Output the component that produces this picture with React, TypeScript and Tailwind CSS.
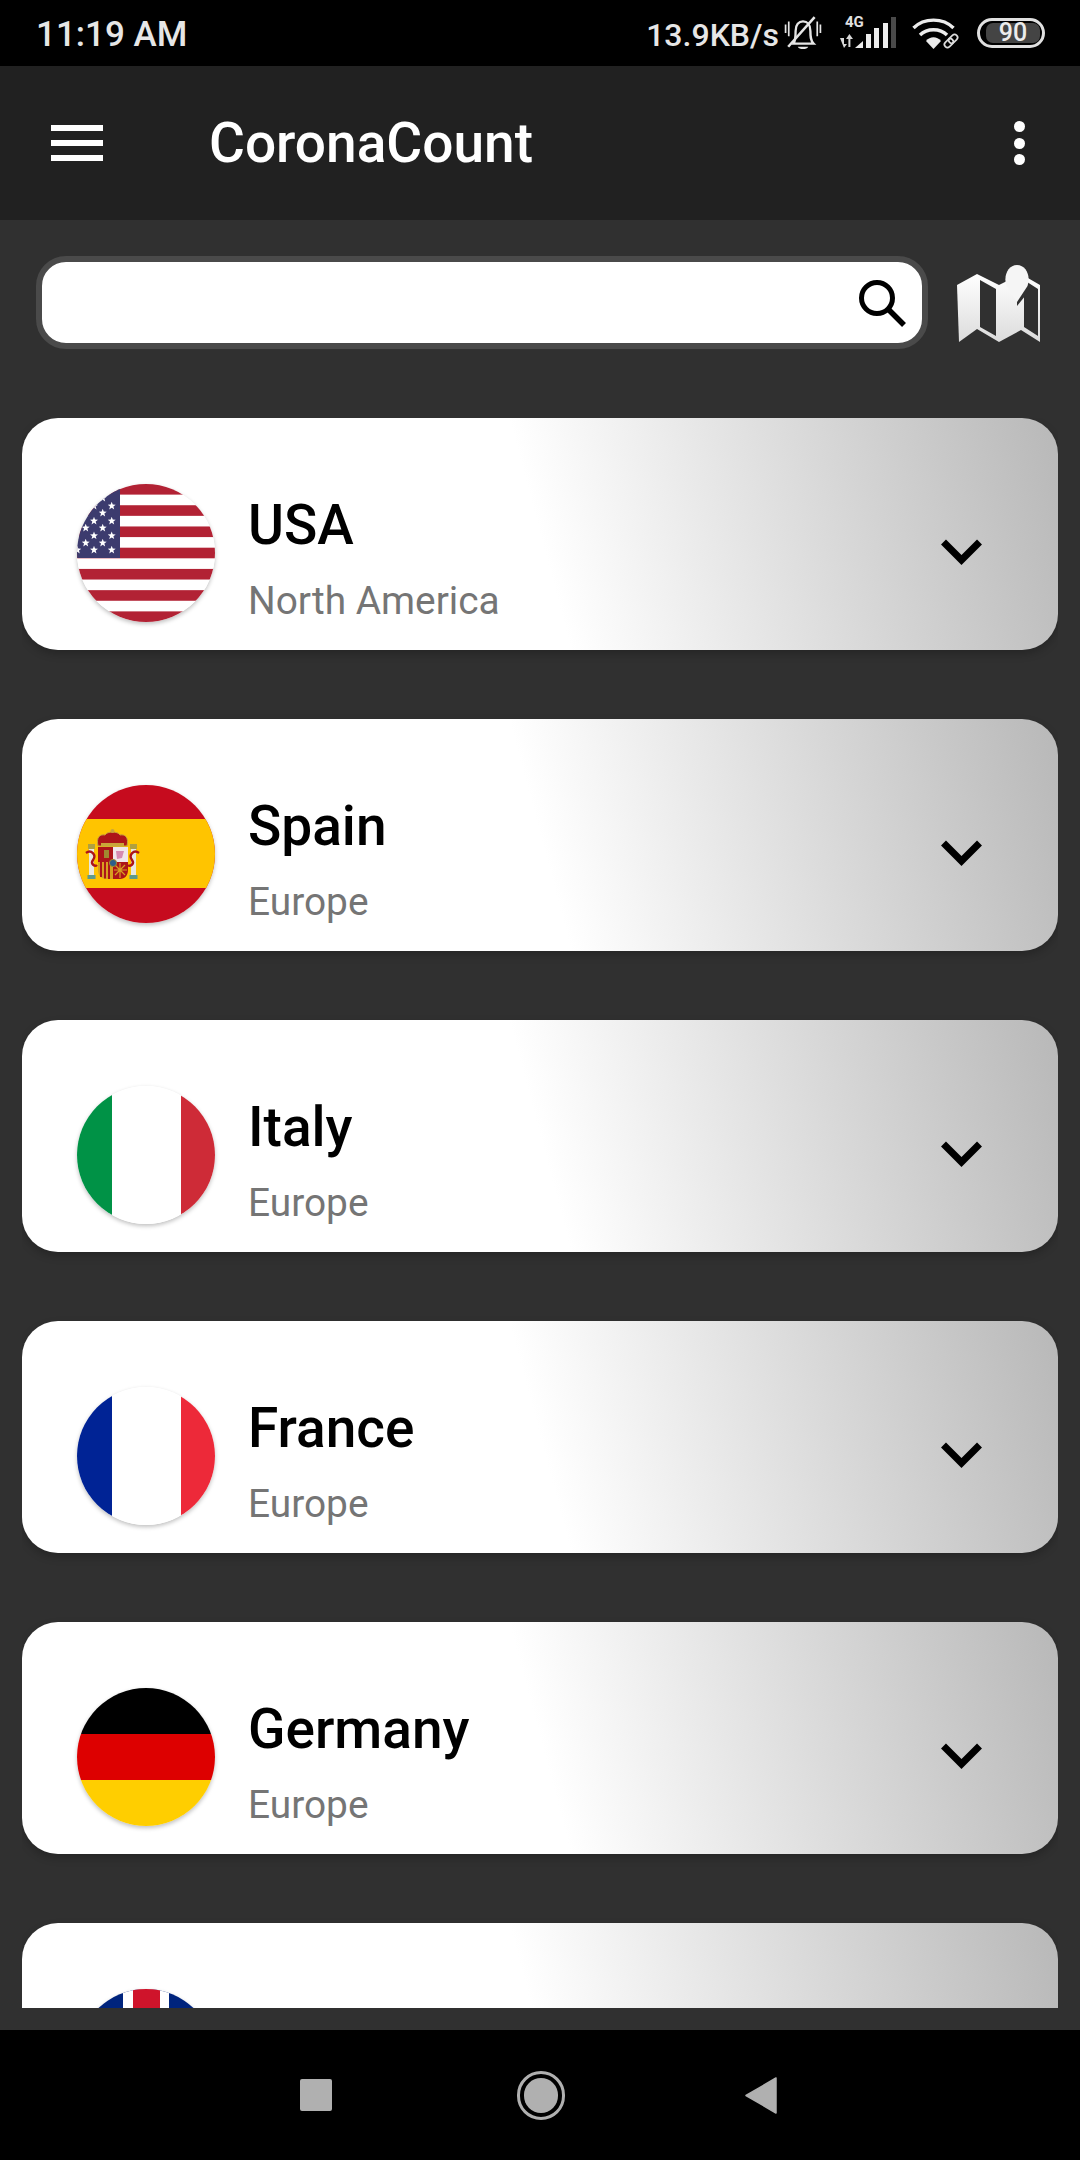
import React from "react";

const starPath = (cx: number, cy: number, r: number) => {
  let d = "";
  for (let i = 0; i < 10; i++) {
    const rad = i % 2 === 0 ? r : r * 0.42;
    const a = (Math.PI / 5) * i - Math.PI / 2;
    d += `${i === 0 ? "M" : "L"}${(cx + rad * Math.cos(a)).toFixed(2)} ${(cy + rad * Math.sin(a)).toFixed(2)}`;
  }
  return d + "Z";
};

const usaStars: [number, number][] = [
  [25.7, 14], [17, 22], [34.7, 22], [8.7, 29], [25.7, 29], [17, 37], [34.7, 37], [8.7, 44],
  [25.7, 44], [17, 51.7], [34.7, 51.7], [8.7, 59], [25.7, 59], [0.3, 66], [17, 66], [34.7, 66],
];

function UsaFlag() {
  const s = 138 / 13;
  return (
    <svg viewBox="0 0 138 138" className="w-full h-full block">
      <rect width="138" height="138" fill="#ffffff" />
      {[0, 2, 4, 6, 8, 10, 12].map((i) => (
        <rect key={i} y={i * s} width="138" height={s} fill="#b22234" />
      ))}
      <rect width="43" height="74" fill="#3c3b6e" />
      {usaStars.map(([x, y], i) => (
        <path key={i} d={starPath(x, y, 4.2)} fill="#ffffff" />
      ))}
    </svg>
  );
}

function SpainFlag() {
  return (
    <svg viewBox="0 0 138 138" className="w-full h-full block">
      <rect width="138" height="138" fill="#c60b1e" />
      <rect y="34" width="138" height="69" fill="#ffc400" />
      {/* crown */}
      <path d="M21 61 C19 52 23 49 28 50 C30 46 41 46 43 50 C48 49 52 52 50 61 Z" fill="#ad1519" stroke="#c8a53a" strokeWidth="1" />
      <circle cx="35.5" cy="46" r="2" fill="#c8a53a" />
      <rect x="24" y="58" width="23" height="3.5" fill="#c8a53a" />
      {/* pillars */}
      <rect x="12" y="64" width="5" height="26" fill="#e8e8e0" />
      <rect x="54" y="64" width="5" height="26" fill="#e8e8e0" />
      <rect x="11" y="59" width="7" height="5" fill="#b0a040" />
      <rect x="53" y="59" width="7" height="5" fill="#b0a040" />
      <rect x="10.5" y="90" width="8" height="4" fill="#5f9a8a" />
      <rect x="52.5" y="90" width="8" height="4" fill="#5f9a8a" />
      {/* ribbons */}
      <path d="M9 68 C14 64 20 70 16 75 C13 79 18 82 20 80" fill="none" stroke="#ad1519" strokeWidth="2.4" />
      <path d="M62 68 C57 64 51 70 55 75 C58 79 53 82 51 80" fill="none" stroke="#ad1519" strokeWidth="2.4" />
      {/* shield */}
      <rect x="21" y="62" width="15" height="15" fill="#ad1519" />
      <rect x="27" y="65" width="5" height="8" fill="#a08a30" />
      <rect x="36" y="62" width="15" height="15" fill="#f0e6ea" />
      <path d="M39 66 L47 66 L45 73 L40 74 Z" fill="#d68bb0" />
      <path d="M21 77 H36 V94 H29 C24 94 21 90 21 85 Z" fill="#d8a020" />
      <path d="M24 77 V92 M28 77 V93.5 M32 77 V94" stroke="#ad1519" strokeWidth="2" fill="none" />
      <path d="M36 77 H51 V85 C51 90 48 94 43 94 H36 Z" fill="#ad1519" />
      <path d="M38 80 L48 90 M48 80 L38 90 M43 78 V93 M37 85 H50" stroke="#d8a020" strokeWidth="1.2" fill="none" />
      <circle cx="36" cy="78" r="3.6" fill="#2d5f8a" stroke="#a08a30" strokeWidth="1" />
    </svg>
  );
}

function TriVertical({ a, b }: { a: string; b: string }) {
  return (
    <svg viewBox="0 0 138 138" className="w-full h-full block">
      <rect width="138" height="138" fill="#ffffff" />
      <rect width="35" height="138" fill={a} />
      <rect x="104" width="34" height="138" fill={b} />
    </svg>
  );
}

function GermanyFlag() {
  return (
    <svg viewBox="0 0 138 138" className="w-full h-full block">
      <rect width="138" height="46" fill="#000000" />
      <rect y="46" width="138" height="46" fill="#dd0000" />
      <rect y="92" width="138" height="46" fill="#ffce00" />
    </svg>
  );
}

function UkFlag() {
  return (
    <svg viewBox="0 0 138 138" className="w-full h-full block">
      <rect width="138" height="138" fill="#00247d" />
      <rect x="46" width="46" height="138" fill="#ffffff" />
      <rect y="46" width="138" height="46" fill="#ffffff" />
      <rect x="56" width="27" height="138" fill="#cf142b" />
      <rect y="56" width="138" height="27" fill="#cf142b" />
    </svg>
  );
}

const countries: { id: string; name: string; region: string; flag: React.ReactNode }[] = [
  { id: "us", name: "USA", region: "North America", flag: <UsaFlag /> },
  { id: "es", name: "Spain", region: "Europe", flag: <SpainFlag /> },
  { id: "it", name: "Italy", region: "Europe", flag: <TriVertical a="#009246" b="#ce2b37" /> },
  { id: "fr", name: "France", region: "Europe", flag: <TriVertical a="#002395" b="#ed2939" /> },
  { id: "de", name: "Germany", region: "Europe", flag: <GermanyFlag /> },
  { id: "uk", name: "", region: "", flag: <UkFlag /> },
];

function Card({ name, region, flag }: { name: string; region: string; flag: React.ReactNode }) {
  return (
    <div className="shrink-0 h-[232px] rounded-[36px] flex items-start pt-[66px] pl-[55px] pr-[76px] shadow-[0_4px_8px_rgba(0,0,0,0.22)] bg-[linear-gradient(75deg,#ffffff_50%,#b8b8b8_100%)]">
      <div className="w-[138px] h-[138px] shrink-0 rounded-full overflow-hidden shadow-[0_2px_4px_rgba(0,0,0,0.25)]">{flag}</div>
      <div className="ml-[33px] mt-[10px] flex-1 flex flex-col">
        <div className="text-[55px] leading-[62px] font-medium text-black">{name}</div>
        <div className="mt-[22px] text-[38.85px] leading-[46px] text-[#757575]">{region}</div>
      </div>
      <svg viewBox="0 0 41 26" className="w-[41px] h-[26px] mt-[55px] shrink-0">
        <path d="M2.5 3 L20.5 21 L38.5 3" fill="none" stroke="#000000" strokeWidth="7" />
      </svg>
    </div>
  );
}

function StatusIcons() {
  return (
    <div className="flex items-center ml-[5px]">
      {/* muted bell */}
      <svg viewBox="0 0 36 34" className="w-[38px] h-[36px] text-[#e6e6e6]">
        <g fill="none" stroke="currentColor">
          <path d="M1.5 9 V17 M4.5 6 V20 M31.5 6 V20 M34.5 9 V17" strokeWidth="1.6" />
          <path d="M9 27 C11 24 11 20 11 15 C11 9 14 6 18 6 C22 6 25 9 25 15 C25 20 25 24 28 27 Z" strokeWidth="2.2" />
          <path d="M4 30 L29 2" strokeWidth="2.4" />
        </g>
        <path d="M13 30 H23 C22 33 14 33 13 30 Z" fill="currentColor" />
      </svg>
      {/* signal */}
      <div className="relative w-[58px] h-[34px] ml-[18px]">
        <span className="absolute left-[5px] top-[-3px] text-[15px] leading-[18px] font-bold text-[#e0e0e0]">4G</span>
        <svg viewBox="0 0 58 34" className="w-[58px] h-[34px]">
          <path d="M0 24 L4 24 L4 30 L7 30 L4 34 Z" fill="#d8d8d8" transform="translate(0 -2)" />
          <rect x="8.4" y="20" width="2" height="11" fill="#d8d8d8" />
          <path d="M9.4 18 L13 23 H6 Z" fill="#d8d8d8" />
          <path d="M15 32 L23 25 V32 Z" fill="#ececec" />
          <rect x="26" y="18" width="5" height="14" fill="#ececec" />
          <rect x="34" y="12" width="5" height="20" fill="#ececec" />
          <rect x="43" y="7" width="5" height="25" fill="#ececec" />
          <rect x="51" y="1" width="5" height="31" fill="#4a4a4a" />
        </svg>
      </div>
      {/* wifi */}
      <svg viewBox="0 0 48 34" className="w-[48px] h-[34px] ml-[14px]">
        <g fill="none" stroke="#ececec" strokeWidth="3.4">
          <path d="M1.5 12 C12 1.5 31 1.5 41.5 12" />
          <path d="M8 19 C15 12 28 12 35 19" />
        </g>
        <path d="M14 25 C18 20 25 20 29 25 L21.5 33 Z" fill="#ececec" />
        <g transform="rotate(-45 39 25)" fill="none" stroke="#dcdcdc" strokeWidth="1.7">
          <rect x="31" y="22" width="10" height="6" rx="3" />
          <rect x="37" y="22" width="10" height="6" rx="3" />
        </g>
      </svg>
      {/* battery */}
      <div className="ml-[17px] w-[68px] h-[30px] rounded-full border-[3px] border-[#e0e0e0] flex items-center justify-center">
        <div className="w-[54px] h-[20px] ml-[4px] rounded-[7px] bg-[#444444] flex items-center justify-center text-[25px] leading-[20px] font-medium text-[#ececec]">90</div>
      </div>
    </div>
  );
}

export default function App() {
  return (
    <div className="w-[1080px] h-[2160px] flex flex-col bg-[#303030] font-['Roboto',sans-serif]">
      <div className="h-[66px] shrink-0 bg-black flex items-center justify-between pl-[36px] pr-[35px] text-[#e6e6e6] font-medium">
        <span className="text-[35px] leading-[40px] mt-[3px]">11:19 AM</span>
        <div className="flex items-center">
          <span className="text-[32px] leading-[40px] mt-[3px]">13.9KB/s</span>
          <StatusIcons />
        </div>
      </div>

      <div className="h-[154px] shrink-0 bg-[#212121] flex items-center pl-[51px] pr-[55px]">
        <div className="w-[52px] flex flex-col gap-[9px]">
          <div className="h-[6px] bg-white" />
          <div className="h-[6px] bg-white" />
          <div className="h-[6px] bg-white" />
        </div>
        <div className="ml-[106px] flex-1 text-[55px] font-medium leading-[62px] text-white">CoronaCount</div>
        <div className="flex flex-col gap-[5.5px]">
          <div className="w-[11px] h-[11px] rounded-full bg-white" />
          <div className="w-[11px] h-[11px] rounded-full bg-white" />
          <div className="w-[11px] h-[11px] rounded-full bg-white" />
        </div>
      </div>

      <div className="flex-1 min-h-0 flex flex-col pt-[36px]">
        <div className="flex items-center pl-[36px] shrink-0">
          <div className="w-[892px] h-[93px] rounded-[30px] border-[6px] border-[#4a4a4a] bg-white flex items-center justify-end pr-[16px]">
            <svg viewBox="0 0 48 48" className="w-[48px] h-[48px]">
              <circle cx="19" cy="19" r="15.5" fill="none" stroke="#000000" strokeWidth="5" />
              <path d="M30 30 L46 46" stroke="#000000" strokeWidth="5.5" />
            </svg>
          </div>
          <svg viewBox="0 0 84 78" className="w-[84px] h-[78px] ml-[29px]">
            <defs>
              <linearGradient id="m" x1="0" y1="0" x2="0" y2="1">
                <stop offset="0" stopColor="#ffffff" />
                <stop offset="1" stopColor="#dcdcdc" />
              </linearGradient>
            </defs>
            <path d="M0 21 L20 10 V65 L2 78 Z" fill="url(#m)" />
            <path d="M20 10 L42 21 V78 L20 65 Z M23 16 V63 L39 72 V25 Z" fill="url(#m)" fillRule="evenodd" />
            <path d="M42 21 L64 10 V66 L42 78 Z" fill="url(#m)" />
            <path d="M64 10 L83 21 V78 L64 66 Z M67 16 V63 L81 72 V25 Z" fill="url(#m)" fillRule="evenodd" />
            <path d="M68 18 L73 26 L60 42 L60 30 Z" fill="#303030" />
            <path d="M49.5 22 C46 12 51 1 60 1 C69 1 74 12 70.5 22 L60 38 Z" fill="#f5f5f5" />
          </svg>
        </div>

        <div className="flex-1 min-h-0 mt-[69px] mb-[22px] mx-[22px] flex flex-col gap-[69px] overflow-hidden">
          {countries.map((c) => (
            <Card key={c.id} name={c.name} region={c.region} flag={c.flag} />
          ))}
        </div>
      </div>

      <div className="h-[130px] shrink-0 bg-black flex items-start">
        <div className="ml-[300px] mt-[49px] w-[32px] h-[32px] rounded-[2px] bg-[#b0b0b0]" />
        <div className="ml-[185px] mt-[41px] w-[48px] h-[49px] rounded-full border-[3px] border-[#b0b0b0] p-[4px]">
          <div className="w-full h-full rounded-full bg-[#b0b0b0]" />
        </div>
        <svg viewBox="0 0 32 37" className="ml-[180px] mt-[47px] w-[32px] h-[37px]">
          <path d="M31 1 V36 L1 18.5 Z" fill="#b0b0b0" stroke="#b0b0b0" strokeWidth="1.5" strokeLinejoin="round" />
        </svg>
      </div>
    </div>
  );
}
